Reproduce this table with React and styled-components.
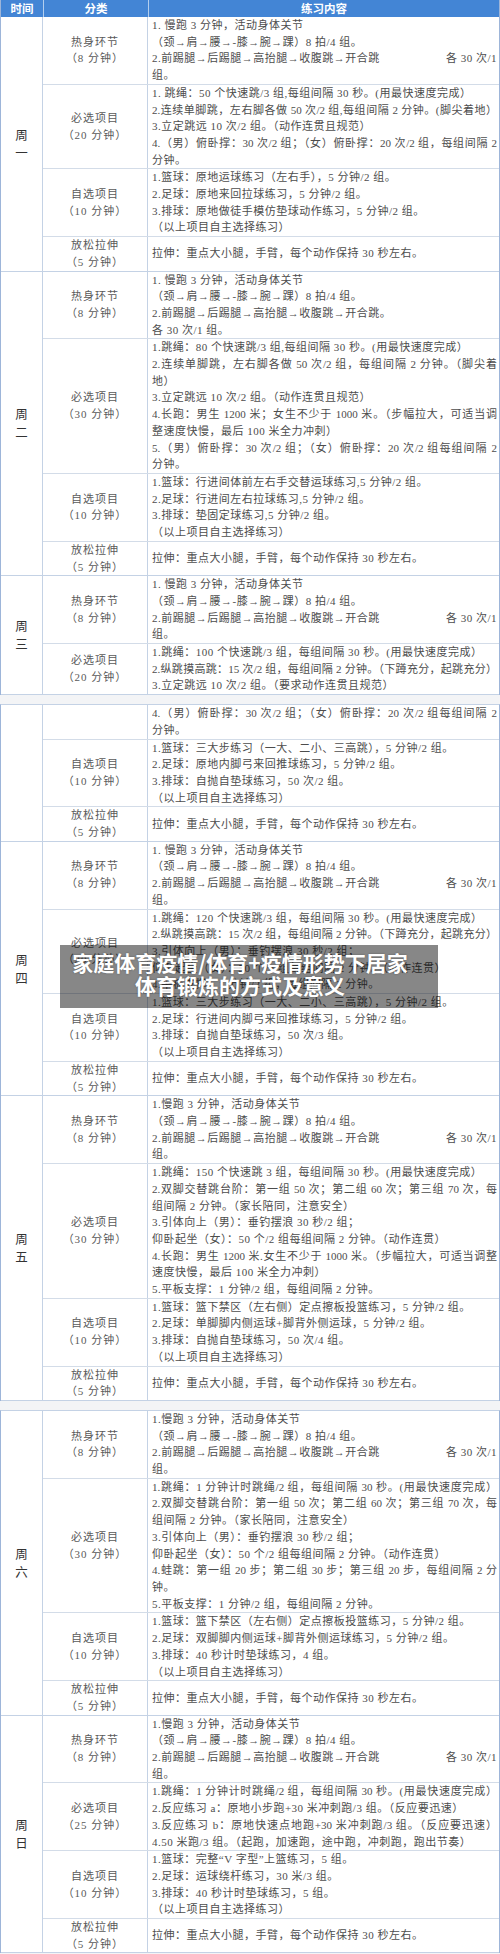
import React from 'react'
import styled, { createGlobalStyle } from 'styled-components'

const GlobalStyle = createGlobalStyle`
  html, body {
    margin: 0;
    padding: 0;
  }
  body {
    background: #f3f4f6;
    font-family: "Liberation Serif", "Noto Sans CJK SC", serif;
  }
`

// F = a line that runs the full width (justified), S = a line with a right-hand part
const F = t => ({ t, full: true })
const S = (l, r) => ({ l, r })

const warm = (first = '1. 慢跑 3 分钟，活动身体关节') => ({
  cat: ['热身环节', '（8 分钟）'],
  lines: [
    first,
    '（颈→肩→腰→-膝→腕→踝）8 拍/4 组。',
    S('2.前踢腿→后踢腿→高抬腿→收腹跳→开合跳', '各 30 次/1'),
    '组。',
  ],
})

const relax = {
  cat: ['放松拉伸', '（5 分钟）'],
  lines: ['拉伸：重点大小腿，手臂，每个动作保持 30 秒左右。'],
}

const free = lines => ({ cat: ['自选项目', '（10 分钟）'], lines: [...lines, '（以上项目自主选择练习）'] })

const sheets = [
  {
    head: true,
    days: [
      {
        label: '周一',
        rows: [
          warm(),
          {
            cat: ['必选项目', '（20 分钟）'],
            lines: [
              '1. 跳绳：50 个快速跳/3 组,每组间隔 30 秒。(用最快速度完成）',
              F('2.连续单脚跳，左右脚各做 50 次/2 组,每组间隔 2 分钟。(脚尖着地）'),
              '3.立定跳远 10 次/2 组。（动作连贯且规范）',
              F('4.（男）俯卧撑：30 次/2 组；（女）俯卧撑：20 次/2 组，每组间隔 2'),
              '分钟。',
            ],
          },
          free([
            '1.篮球：原地运球练习（左右手），5 分钟/2 组。',
            '2.足球：原地来回拉球练习，5 分钟/2 组。',
            '3.排球：原地做徒手模仿垫球动作练习，5 分钟/2 组。',
          ]),
          relax,
        ],
      },
      {
        label: '周二',
        rows: [
          {
            cat: ['热身环节', '（8 分钟）'],
            lines: [
              '1. 慢跑 3 分钟，活动身体关节',
              '（颈→肩→腰→-膝→腕→踝）8 拍/4 组。',
              '2.前踢腿→后踢腿→高抬腿→收腹跳→开合跳。',
              '各 30 次/1 组。',
            ],
          },
          {
            cat: ['必选项目', '（30 分钟）'],
            lines: [
              '1.跳绳：80 个快速跳/3 组,每组间隔 30 秒。(用最快速度完成）',
              F('2.连续单脚跳，左右脚各做 50 次/2 组，每组间隔 2 分钟。（脚尖着'),
              '地）',
              '3.立定跳远 10 次/2 组。（动作连贯且规范）',
              F('4.长跑：男生 1200 米；女生不少于 1000 米。（步幅拉大，可适当调'),
              '整速度快慢，最后 100 米全力冲刺）',
              F('5.（男）俯卧撑：30 次/2 组；（女）俯卧撑：20 次/2 组每组间隔 2'),
              '分钟。',
            ],
          },
          free([
            '1.篮球：行进间体前左右手交替运球练习,5 分钟/2 组。',
            '2.足球：行进间左右拉球练习,5 分钟/2 组。',
            '3.排球：垫固定球练习,5 分钟/2 组。',
          ]),
          relax,
        ],
      },
      {
        label: '周三',
        rows: [
          warm(),
          {
            cat: ['必选项目', '（20 分钟）'],
            lines: [
              '1.跳绳：100 个快速跳/3 组，每组间隔 30 秒。(用最快速度完成）',
              F('2.纵跳摸高跳：15 次/2 组，每组间隔 2 分钟。（下蹲充分，起跳充分）'),
              '3.立定跳远 10 次/2 组。（要求动作连贯且规范）',
            ],
          },
        ],
      },
    ],
  },
  {
    days: [
      {
        label: '',
        rows: [
          {
            cat: [],
            lines: [F('4.（男）俯卧撑：30 次/2 组；（女）俯卧撑：20 次/2 组每组间隔 2'), '分钟。'],
          },
          free([
            '1.篮球：三大步练习（一大、二小、三高跳），5 分钟/2 组。',
            '2.足球：原地内脚弓来回推球练习，5 分钟/2 组。',
            '3.排球：自抛自垫球练习，50 次/2 组。',
          ]),
          relax,
        ],
      },
      {
        label: '周四',
        rows: [
          warm(),
          {
            cat: ['必选项目', '（20 分钟）'],
            lines: [
              '1.跳绳：120 个快速跳/3 组，每组间隔 30 秒。(用最快速度完成）',
              F('2.纵跳摸高跳：15 次/2 组，每组间隔 2 分钟。（下蹲充分，起跳充分）'),
              '3.引体向上（男）：垂钓摆浪 30 秒/2 组；',
              '仰卧起坐（女）：50 个/2 组每组间隔 2 分钟。（动作连贯）',
              '4.平板支撑：1 分钟/2 组，每组间隔 2 分钟。',
            ],
          },
          free([
            '1.篮球：三大步练习（一大、二小、三高跳），5 分钟/2 组。',
            '2.足球：行进间内脚弓来回推球练习，5 分钟/2 组。',
            '3.排球：自抛自垫球练习，50 次/3 组。',
          ]),
          relax,
        ],
      },
      {
        label: '周五',
        rows: [
          warm('1.慢跑 3 分钟，活动身体关节'),
          {
            cat: ['必选项目', '（30 分钟）'],
            lines: [
              '1.跳绳：150 个快速跳 3 组，每组间隔 30 秒。(用最快速度完成）',
              F('2.双脚交替跳台阶：第一组 50 次；第二组 60 次；第三组 70 次，每'),
              '组间隔 2 分钟。（家长陪同，注意安全）',
              '3.引体向上（男）：垂钓摆浪 30 秒/2 组；',
              '仰卧起坐（女）：50 个/2 组每组间隔 2 分钟。（动作连贯）',
              F('4.长跑：男生 1200 米.女生不少于 1000 米。（步幅拉大，可适当调整'),
              '速度快慢，最后 100 米全力冲刺）',
              '5.平板支撑：1 分钟/2 组，每组间隔 2 分钟。',
            ],
          },
          free([
            '1.篮球：篮下禁区（左右侧）定点擦板投篮练习，5 分钟/2 组。',
            '2.足球：单脚脚内侧运球+脚背外侧运球，5 分钟/2 组。',
            '3.排球：自抛自垫球练习，50 次/4 组。',
          ]),
          relax,
        ],
      },
    ],
  },
  {
    days: [
      {
        label: '周六',
        rows: [
          warm('1.慢跑 3 分钟，活动身体关节'),
          {
            cat: ['必选项目', '（30 分钟）'],
            lines: [
              F('1.跳绳：1 分钟计时跳绳/2 组，每组间隔 30 秒。(用最快速度完成）'),
              F('2.双脚交替跳台阶：第一组 50 次；第二组 60 次；第三组 70 次，每'),
              '组间隔 2 分钟。（家长陪同，注意安全）',
              '3.引体向上（男）：垂钓摆浪 30 秒/2 组；',
              '仰卧起坐（女）：50 个/2 组每组间隔 2 分钟。（动作连贯）',
              F('4.蛙跳：第一组 20 步；第二组 30 步；第三组 20 步，每组间隔 2 分'),
              '钟。',
              '5.平板支撑：1 分钟/2 组，每组间隔 2 分钟。',
            ],
          },
          free([
            '1.篮球：篮下禁区（左右侧）定点擦板投篮练习，5 分钟/2 组。',
            '2.足球：双脚脚内侧运球+脚背外侧运球练习，5 分钟/2 组。',
            '3.排球：40 秒计时垫球练习，4 组。',
          ]),
          relax,
        ],
      },
      {
        label: '周日',
        rows: [
          warm('1.慢跑 3 分钟，活动身体关节'),
          {
            cat: ['必选项目', '（25 分钟）'],
            lines: [
              F('1.跳绳：1 分钟计时跳绳/2 组，每组间隔 30 秒。(用最快速度完成）'),
              '2.反应练习 a：原地小步跑+30 米冲刺跑/3 组。（反应要迅速）',
              F('3.反应练习 b：原地快速点地跑+30 米冲刺跑/3 组。（反应要迅速）'),
              '4.50 米跑/3 组。（起跑，加速跑，途中跑，冲刺跑，跑出节奏）',
            ],
          },
          free([
            '1.篮球：完整“V 字型”上篮练习，5 组。',
            '2.足球：运球绕杆练习，30 米/3 组。',
            '3.排球：40 秒计时垫球练习，5 组。',
          ]),
          relax,
        ],
      },
    ],
  },
]

function App() {
  return (
    <Page>
      <GlobalStyle />
      {sheets.map((sheet, si) => (
        <Sheet key={si} $top={!sheet.head}>
          {sheet.head && (
            <Head>
              <HeadCell>时间</HeadCell>
              <HeadCell>分类</HeadCell>
              <HeadCell>练习内容</HeadCell>
            </Head>
          )}
          {sheet.days.map((day, di) => (
            <Day key={di}>
              <DayLabel>
                {day.label.split('').map((ch, i) => <span key={i}>{ch}</span>)}
              </DayLabel>
              <div>
                {day.rows.map((row, ri) => (
                  <Row key={ri}>
                    <Cat>
                      {row.cat.map((c, i) => <div key={i}>{c}</div>)}
                    </Cat>
                    <Body>
                      {row.lines.map((ln, i) => {
                        if (typeof ln === 'string') return <Line key={i}>{ln}</Line>
                        if (ln.r) return (
                          <Split key={i}>
                            <span>{ln.l}</span>
                            <span>{ln.r}</span>
                          </Split>
                        )
                        return <Line key={i} $full>{ln.t}</Line>
                      })}
                    </Body>
                  </Row>
                ))}
              </div>
            </Day>
          ))}
        </Sheet>
      ))}
      <Banner>
        <div>家庭体育疫情/体育+疫情形势下居家</div>
        <div>体育锻炼的方式及意义</div>
      </Banner>
    </Page>
  )
}

const Page = styled.div`
  position: relative;
  width: 500px;
  display: flex;
  flex-direction: column;
  gap: 9px;
`

const Sheet = styled.section`
  background: #fff;
  border-left: 1px solid #9db5d9;
  border-right: 1px solid #9db5d9;
  border-top: ${p => (p.$top ? '1px solid #c4d2e5' : 'none')};
`

const Head = styled.div`
  display: grid;
  grid-template-columns: 42px 105px 1fr;
  height: 17px;
  background: #4385d5;
`

const HeadCell = styled.div`
  color: #fff;
  font-family: "Noto Sans CJK SC", sans-serif;
  font-weight: 700;
  font-size: 11.5px;
  line-height: 17px;
  text-align: center;
  & + & {
    border-left: 1px solid rgba(255, 255, 255, 0.6);
  }
`

const Day = styled.div`
  display: grid;
  grid-template-columns: 42px 1fr;
  border-bottom: 1px solid #c4d2e5;
`

const DayLabel = styled.div`
  display: flex;
  flex-direction: column;
  align-items: center;
  justify-content: center;
  border-right: 1px solid #c4d2e5;
  font-family: "Noto Sans CJK SC", sans-serif;
  font-size: 12.5px;
  line-height: 18px;
  color: #333;
`

const Row = styled.div`
  display: grid;
  grid-template-columns: 105px 1fr;
  & + & {
    border-top: 1px solid #d3dce8;
  }
`

const Cat = styled.div`
  display: flex;
  flex-direction: column;
  align-items: center;
  justify-content: center;
  min-height: 33.4px;
  border-right: 1px solid #c4d2e5;
  color: #5a5a5a;
  font-size: 11px;
  letter-spacing: 1px;
  line-height: 16.7px;
`

const Body = styled.div`
  display: flex;
  flex-direction: column;
  justify-content: center;
  min-width: 0;
  padding: 0 2px 0 4px;
  color: #4d4d4d;
  font-size: 11px;
  letter-spacing: 0.5px;
  line-height: 16.7px;
`

const Line = styled.div`
  white-space: nowrap;
  overflow: hidden;
  letter-spacing: ${p => (p.$full ? '0' : 'inherit')};
  text-align: left;
  text-align-last: ${p => (p.$full ? 'justify' : 'auto')};
`

const Split = styled.div`
  display: flex;
  justify-content: space-between;
  white-space: nowrap;
`

const Banner = styled.div`
  position: absolute;
  left: 60px;
  top: 945px;
  width: 378px;
  height: 63px;
  box-sizing: border-box;
  padding: 6px 18px 0 0;
  background: rgba(0, 0, 0, 0.47);
  color: #fff;
  font-family: "Noto Sans CJK SC", sans-serif;
  font-weight: 700;
  font-size: 21px;
  line-height: 23px;
  text-align: center;
  text-shadow: 0 0 2px rgba(0, 0, 0, 0.35);
`

export default App
